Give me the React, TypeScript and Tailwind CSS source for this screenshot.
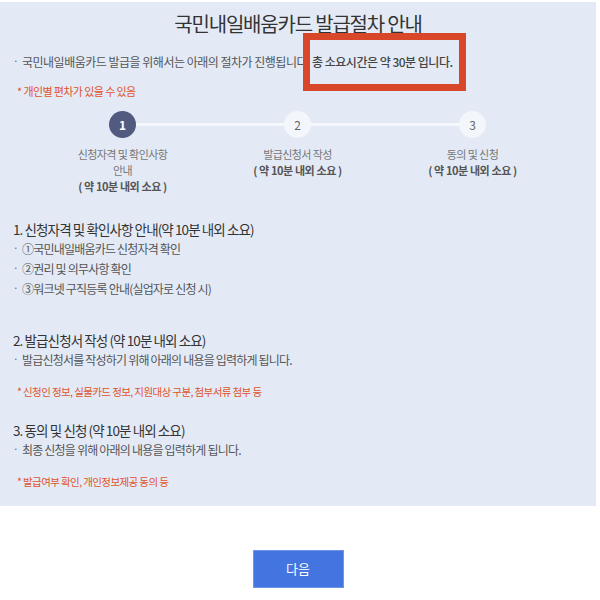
import React from 'react';

const steps = [
  { no: '1', label: '신청자격 및 확인사항 안내', active: true },
  { no: '2', label: '발급신청서 작성', active: false },
  { no: '3', label: '동의 및 신청', active: false },
];

const sections = [
  {
    title: '1. 신청자격 및 확인사항 안내(약 10분 내외 소요)',
    items: ['①국민내일배움카드 신청자격 확인', '②권리 및 의무사항 확인', '③워크넷 구직등록 안내(실업자로 신청 시)'],
    note: '',
    gap: '',
  },
  {
    title: '2. 발급신청서 작성 (약 10분 내외 소요)',
    items: ['발급신청서를 작성하기 위해 아래의 내용을 입력하게 됩니다.'],
    note: '* 신청인 정보, 실물카드 정보, 지원대상 구분, 첨부서류 첨부 등',
    gap: 'mt-[31px]',
  },
  {
    title: '3. 동의 및 신청 (약 10분 내외 소요)',
    items: ['최종 신청을 위해 아래의 내용을 입력하게 됩니다.'],
    note: '* 발급여부 확인, 개인정보제공 동의 등',
    gap: 'mt-[20px]',
  },
];

function Bullet({ children }: { children: React.ReactNode }) {
  return (
    <li className="flex items-center h-[20px]">
      <span className="w-[9px] text-[10px] text-[#666] -mt-[4px]">·</span>
      <span>{children}</span>
    </li>
  );
}

export default function App() {
  return (
    <div
      className="w-[600px] h-[600px] bg-white pt-[2px]"
      style={{ fontFamily: '"Noto Sans CJK KR", "Noto Sans", sans-serif' }}
    >
      {/* Guide panel */}
      <div className="relative w-[596px] h-[504px] bg-[#e3eaf6] px-[13px]">
        <h1 className="pt-[8px] h-[40px] text-center text-[20px] leading-[28px] text-[#333] tracking-[-1.2px]">
          국민내일배움카드 발급절차 안내
        </h1>

        <ul className="mt-[10px] text-[12px] text-[#555] tracking-[-0.5px]">
          <Bullet>
            국민내일배움카드 발급을 위해서는 아래의 절차가 진행됩니다.{' '}
            <span className="font-medium text-[#444]">총 소요시간은 약 30분 입니다.</span>
          </Bullet>
        </ul>
        <p className="mt-[11px] ml-[4px] h-[16px] text-[11px] leading-[16px] text-[#e0532a] tracking-[-0.6px]">
          * 개인별 편차가 있을 수 있음
        </p>

        {/* Steps */}
        <div className="relative mt-[12px] ml-[22px] w-[525px] grid grid-cols-[175px_175px_175px]">
          <div className="absolute left-[87px] right-[87px] top-[12px] h-[3px] bg-[#f4f7fc]" />
          {steps.map((s) => (
            <div key={s.no} className="relative flex flex-col items-center">
              <div
                className={`w-[27px] h-[27px] rounded-full flex items-center justify-center text-[12px] ${
                  s.active ? 'bg-[#525a80] text-white font-bold' : 'bg-[#f3f6fb] text-[#666]'
                }`}
              >
                {s.no}
              </div>
              <p className="mt-[8px] w-[96px] text-center text-[11px] leading-[16px] text-[#777] tracking-[-0.6px] break-keep">
                {s.label}
              </p>
              <p className="text-[11px] leading-[16px] font-bold text-[#555] tracking-[-0.4px]">( 약 10분 내외 소요 )</p>
            </div>
          ))}
        </div>

        {/* Sections */}
        <div className="mt-[25px]">
          {sections.map((sec, i) => (
            <div key={i} className={sec.gap}>
              <h2 className="h-[20px] text-[13.5px] leading-[20px] text-[#333] tracking-[-0.9px]">{sec.title}</h2>
              <ul className="text-[12px] text-[#555] tracking-[-0.8px]">
                {sec.items.map((it) => (
                  <Bullet key={it}>{it}</Bullet>
                ))}
              </ul>
              {sec.note && (
                <p className="mt-[14px] ml-[4px] h-[16px] text-[10.5px] leading-[16px] text-[#e0532a] tracking-[-0.6px]">
                  {sec.note}
                </p>
              )}
            </div>
          ))}
        </div>

        {/* annotation box */}
        <div className="absolute left-[303px] top-[31px] w-[163px] h-[58px] border-[7px] border-[#d9472b]" />
      </div>

      <div className="w-[596px] mt-[44px] flex justify-center">
        <button className="w-[91px] h-[38px] bg-[#4374e0] border border-[#6f95e8] text-white text-[13px]">다음</button>
      </div>
    </div>
  );
}
